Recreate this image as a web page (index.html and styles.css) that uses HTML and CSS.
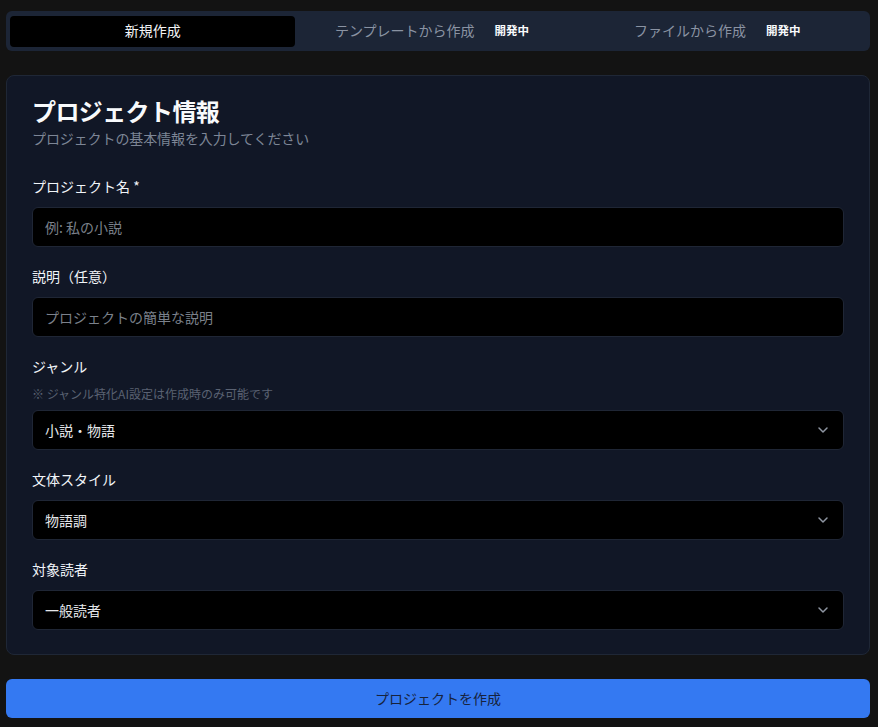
FILE: index.html
```html
<!DOCTYPE html>
<html lang="ja">
<head>
<meta charset="utf-8">
<title>プロジェクト作成</title>
<link rel="stylesheet" href="styles.css">
</head>
<body>
<div class="page">
  <div class="tabs">
    <div class="tab active">新規作成</div>
    <div class="tab">テンプレートから作成<span class="badge">開発中</span></div>
    <div class="tab">ファイルから作成<span class="badge">開発中</span></div>
  </div>

  <div class="card">
    <div class="card-header">
      <h1 class="title">プロジェクト情報</h1>
      <p class="subtitle">プロジェクトの基本情報を入力してください</p>
    </div>
    <div class="form">
      <div class="field">
        <label class="label">プロジェクト名 *</label>
        <div class="input placeholder">例: 私の小説</div>
      </div>
      <div class="field">
        <label class="label">説明（任意）</label>
        <div class="input placeholder">プロジェクトの簡単な説明</div>
      </div>
      <div class="field">
        <label class="label">ジャンル</label>
        <p class="hint">※ ジャンル特化AI設定は作成時のみ可能です</p>
        <div class="input select"><span>小説・物語</span>
          <svg class="chev" viewBox="0 0 16 16" width="16" height="16"><path d="M4 6l4 4 4-4" fill="none" stroke="currentColor" stroke-width="1.5" stroke-linecap="round" stroke-linejoin="round"/></svg>
        </div>
      </div>
      <div class="field">
        <label class="label">文体スタイル</label>
        <div class="input select"><span>物語調</span>
          <svg class="chev" viewBox="0 0 16 16" width="16" height="16"><path d="M4 6l4 4 4-4" fill="none" stroke="currentColor" stroke-width="1.5" stroke-linecap="round" stroke-linejoin="round"/></svg>
        </div>
      </div>
      <div class="field">
        <label class="label">対象読者</label>
        <div class="input select"><span>一般読者</span>
          <svg class="chev" viewBox="0 0 16 16" width="16" height="16"><path d="M4 6l4 4 4-4" fill="none" stroke="currentColor" stroke-width="1.5" stroke-linecap="round" stroke-linejoin="round"/></svg>
        </div>
      </div>
    </div>
  </div>

  <button class="submit">プロジェクトを作成</button>
</div>
</body>
</html>
```

FILE: styles.css
```css
* { box-sizing: border-box; }
html, body { margin: 0; padding: 0; }
body {
  background: #131313;
  font-family: "Noto Sans CJK JP", "Noto Sans", sans-serif;
  color: #f1f5f9;
  font-size: 14px;
}
.page {
  padding: 11px 8px 9px 6px;
  display: flex;
  flex-direction: column;
}
.tabs {
  display: grid;
  grid-template-columns: 1fr 1fr 1fr;
  background: #1c2536;
  border-radius: 6px;
  padding: 5px 4px 4px 4px;
  height: 40px;
}
.tab {
  display: flex;
  align-items: center;
  justify-content: center;
  color: #8a93a3;
  font-size: 14px;
  height: 31px;
  padding-bottom: 3px;
  border-radius: 4px;
}
.tab.active {
  background: #000;
  color: #f3f4f6;
}
.badge {
  font-size: 11.5px;
  font-weight: 700;
  color: #f8fafc;
  margin-left: 20px;
  padding-right: 12px;
}
.card {
  margin-top: 24px;
  background: #111726;
  border: 1px solid #1f2736;
  border-radius: 8px;
  padding: 19px 25px 24px 25px;
}
.title {
  margin: 0;
  font-size: 24px;
  font-weight: 700;
  line-height: 32px;
  letter-spacing: -0.6px;
  color: #f8fafc;
}
.subtitle {
  margin: 1px 0 0 0;
  font-size: 14px;
  line-height: 20px;
  letter-spacing: -0.1px;
  color: #7d8696;
}
.form {
  margin-top: 28px;
  display: flex;
  flex-direction: column;
  gap: 19px;
}
.field {
  display: flex;
  flex-direction: column;
}
.label {
  font-size: 14px;
  line-height: 20px;
  font-weight: 400;
  color: #f1f5f9;
  margin-bottom: 11px;
}
.hint {
  margin: -1px 0 8px 0;
  font-size: 12px;
  line-height: 16px;
  color: #5a6272;
}
.input {
  height: 40px;
  background: #000;
  border: 1px solid #1f2635;
  border-radius: 6px;
  padding: 0 12px 1px 12px;
  display: flex;
  align-items: center;
  font-size: 14px;
  color: #e5e7eb;
}
.placeholder { color: #7b818b; }
.select { justify-content: space-between; }
.chev { color: #8f96a2; width: 16px; height: 16px; }
.submit {
  margin-top: 24px;
  height: 39px;
  border: none;
  border-radius: 6px;
  background: #3479f2;
  color: #17233d;
  font-family: "Noto Sans CJK JP", "Noto Sans", sans-serif;
  font-size: 14px;
  font-weight: 400;
  padding-bottom: 2px;
}
```
